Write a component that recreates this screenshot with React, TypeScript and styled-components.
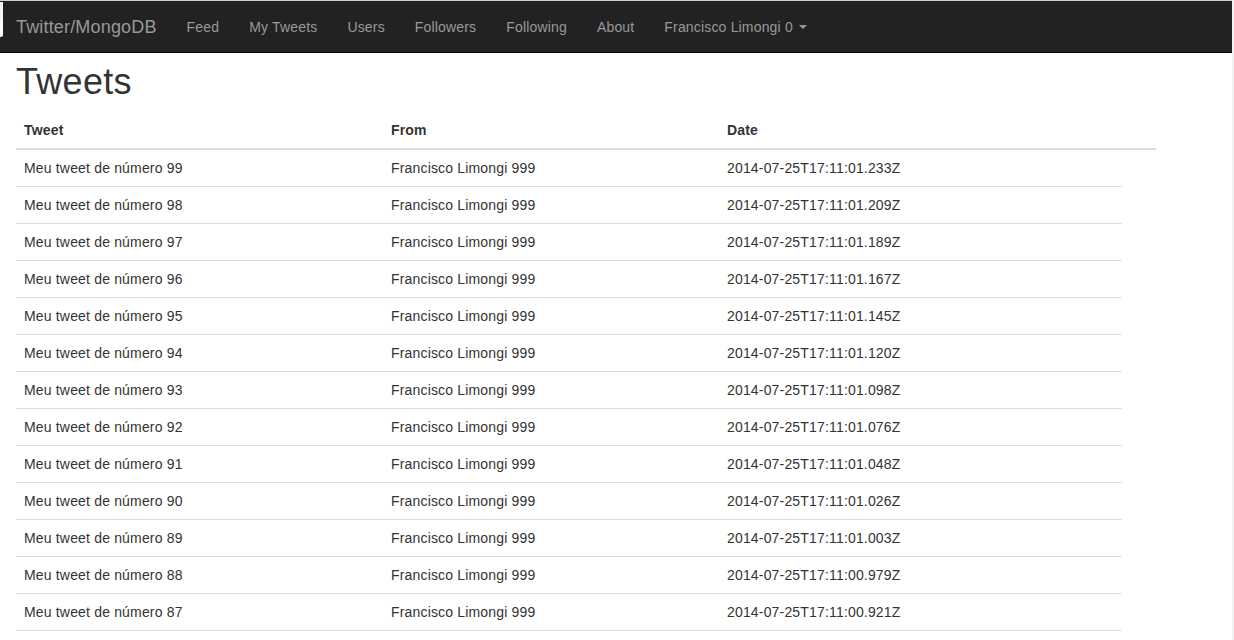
import React from "react";
import styled, { createGlobalStyle } from "styled-components";

const GlobalStyle = createGlobalStyle`
  html {
    background: #f1f1f1;
    overflow: hidden;
  }
  body {
    margin: 0 2px 0 0;
    min-height: 100vh;
    background: #fff;
    font-family: "Liberation Sans", Arial, Helvetica, sans-serif;
    font-size: 14px;
    line-height: 20px;
    letter-spacing: 0.17px;
    color: #333;
  }
`;

const Page = styled.div`
  position: relative;
  border-top: 1px solid #cdcdcd;
`;

const NavBar = styled.nav`
  display: flex;
  align-items: center;
  height: 51px;
  background-color: #222;
  border-bottom: 1px solid #080808;
`;

/* leftover bit of window chrome on the left edge */
const EdgeTab = styled.span`
  position: absolute;
  left: 0;
  top: 1px;
  width: 3px;
  height: 35px;
  background: #f4f4f4;
  border-bottom-right-radius: 3px;
  border-top: 19px solid #f4f4f4;
  box-shadow: inset 0 -16px 0 #fff;
  box-sizing: border-box;
`;

const Brand = styled.a`
  padding: 0 15px 0 16px;
  font-size: 18px;
  line-height: 20px;
  color: #999;
  text-decoration: none;
`;

const NavList = styled.ul`
  display: flex;
  margin: 0;
  padding: 0;
  list-style: none;
`;

const NavLink = styled.a`
  display: flex;
  align-items: center;
  padding: 15px;
  font-size: 14px;
  line-height: 20px;
  color: #999;
  text-decoration: none;
`;

const Caret = styled.span`
  display: inline-block;
  width: 0;
  height: 0;
  margin-left: 6px;
  border-top: 4px solid #999;
  border-left: 4px solid transparent;
  border-right: 4px solid transparent;
`;

const Content = styled.main`
  padding: 0 16px;
`;

const Title = styled.h1`
  margin: 9px 0 10px;
  font-size: 36px;
  font-weight: 500;
  line-height: 39.6px;
  letter-spacing: 0.3px;
  color: #333;
`;

const Table = styled.table`
  width: 1140px;
  border-collapse: collapse;
  border-spacing: 0;
  table-layout: fixed;
`;

const HeadCell = styled.th<{ $w: number }>`
  width: ${(p) => p.$w}px;
  padding: 8px;
  text-align: left;
  font-weight: 700;
  line-height: 20px;
  vertical-align: bottom;
  border-bottom: 2px solid #ddd;
`;

const Cell = styled.td`
  padding: 8px;
  line-height: 20px;
  vertical-align: top;
  border-bottom: 1px solid #ddd;
`;

const links = ["Feed", "My Tweets", "Users", "Followers", "Following", "About"];

const dates = [
  "2014-07-25T17:11:01.233Z",
  "2014-07-25T17:11:01.209Z",
  "2014-07-25T17:11:01.189Z",
  "2014-07-25T17:11:01.167Z",
  "2014-07-25T17:11:01.145Z",
  "2014-07-25T17:11:01.120Z",
  "2014-07-25T17:11:01.098Z",
  "2014-07-25T17:11:01.076Z",
  "2014-07-25T17:11:01.048Z",
  "2014-07-25T17:11:01.026Z",
  "2014-07-25T17:11:01.003Z",
  "2014-07-25T17:11:00.979Z",
  "2014-07-25T17:11:00.921Z",
];

const tweets = dates.map((date, i) => ({
  text: `Meu tweet de número ${99 - i}`,
  from: "Francisco Limongi 999",
  date,
}));

export default function App() {
  return (
    <Page>
      <GlobalStyle />
      <NavBar>
        <EdgeTab />
        <Brand href="#">Twitter/MongoDB</Brand>
        <NavList>
          {links.map((l) => (
            <li key={l}>
              <NavLink href="#">{l}</NavLink>
            </li>
          ))}
          <li>
            <NavLink href="#">
              Francisco Limongi 0<Caret />
            </NavLink>
          </li>
        </NavList>
      </NavBar>
      <Content>
        <Title>Tweets</Title>
        <Table>
          <thead>
            <tr>
              <HeadCell $w={351}>Tweet</HeadCell>
              <HeadCell $w={320}>From</HeadCell>
              <HeadCell $w={387}>Date</HeadCell>
              <HeadCell $w={18}></HeadCell>
            </tr>
          </thead>
          <tbody>
            {tweets.map((t) => (
              <tr key={t.text}>
                <Cell>{t.text}</Cell>
                <Cell>{t.from}</Cell>
                <Cell>{t.date}</Cell>
              </tr>
            ))}
          </tbody>
        </Table>
      </Content>
    </Page>
  );
}
